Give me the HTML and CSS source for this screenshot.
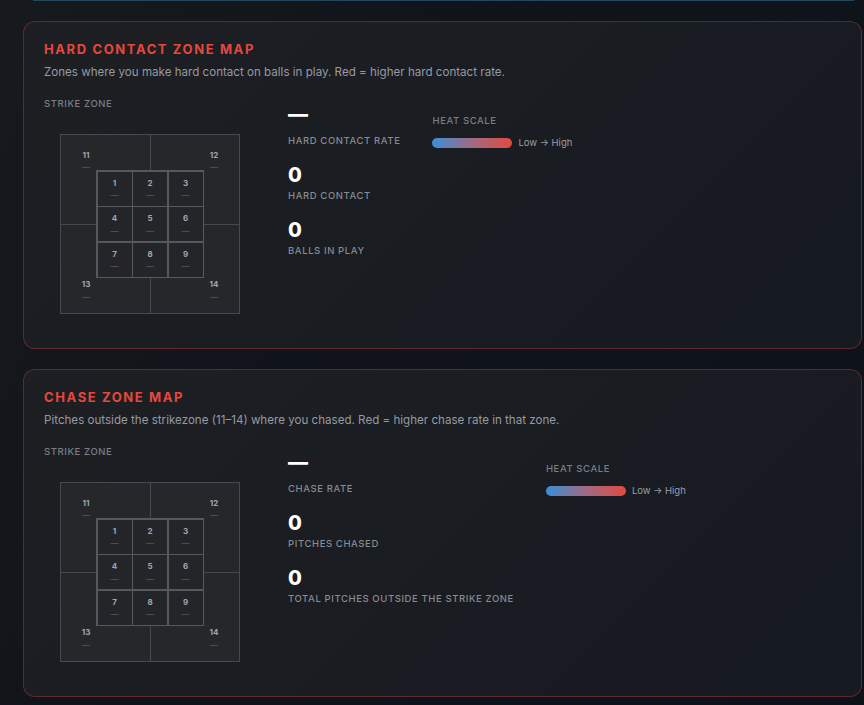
FILE: index.html
```html
<!DOCTYPE html>
<html lang="en">
<head>
<meta charset="utf-8">
<title>Zone Maps</title>
<link rel="stylesheet" href="styles.css">
</head>
<body>
<div class="page">
  <div class="prev-edge"></div>

  <section class="card">
    <h2 class="card-title">Hard Contact Zone Map</h2>
    <p class="card-desc">Zones where you make hard contact on balls in play. Red = higher hard contact rate.</p>
    <div class="card-body">
      <div class="zone-col">
        <div class="caps-label">Strike Zone</div>
        <div class="zone-wrap">
          <div class="zone">
            <div class="quad quad-tl"><div class="zl"><span class="zn">11</span><span class="zd">—</span></div></div>
            <div class="quad quad-tr"><div class="zl"><span class="zn">12</span><span class="zd">—</span></div></div>
            <div class="quad quad-bl"><div class="zl"><span class="zn">13</span><span class="zd">—</span></div></div>
            <div class="quad quad-br"><div class="zl"><span class="zn">14</span><span class="zd">—</span></div></div>
            <div class="inner">
              <div class="cell"><div class="zl"><span class="zn">1</span><span class="zd">—</span></div></div>
              <div class="cell"><div class="zl"><span class="zn">2</span><span class="zd">—</span></div></div>
              <div class="cell"><div class="zl"><span class="zn">3</span><span class="zd">—</span></div></div>
              <div class="cell"><div class="zl"><span class="zn">4</span><span class="zd">—</span></div></div>
              <div class="cell"><div class="zl"><span class="zn">5</span><span class="zd">—</span></div></div>
              <div class="cell"><div class="zl"><span class="zn">6</span><span class="zd">—</span></div></div>
              <div class="cell"><div class="zl"><span class="zn">7</span><span class="zd">—</span></div></div>
              <div class="cell"><div class="zl"><span class="zn">8</span><span class="zd">—</span></div></div>
              <div class="cell"><div class="zl"><span class="zn">9</span><span class="zd">—</span></div></div>
            </div>
          </div>
        </div>
      </div>
      <div class="stats">
        <div class="stat">
          <div class="stat-value stat-empty">—</div>
          <div class="stat-label">Hard Contact Rate</div>
        </div>
        <div class="stat">
          <div class="stat-value">0</div>
          <div class="stat-label">Hard Contact</div>
        </div>
        <div class="stat">
          <div class="stat-value">0</div>
          <div class="stat-label">Balls in Play</div>
        </div>
      </div>
      <div class="heat">
        <div class="caps-label">Heat Scale</div>
        <div class="heat-row">
          <div class="heat-bar"></div>
          <span class="heat-text">Low → High</span>
        </div>
      </div>
    </div>
  </section>

  <section class="card">
    <h2 class="card-title">Chase Zone Map</h2>
    <p class="card-desc">Pitches outside the strikezone (11–14) where you chased. Red = higher chase rate in that zone.</p>
    <div class="card-body">
      <div class="zone-col">
        <div class="caps-label">Strike Zone</div>
        <div class="zone-wrap">
          <div class="zone">
            <div class="quad quad-tl"><div class="zl"><span class="zn">11</span><span class="zd">—</span></div></div>
            <div class="quad quad-tr"><div class="zl"><span class="zn">12</span><span class="zd">—</span></div></div>
            <div class="quad quad-bl"><div class="zl"><span class="zn">13</span><span class="zd">—</span></div></div>
            <div class="quad quad-br"><div class="zl"><span class="zn">14</span><span class="zd">—</span></div></div>
            <div class="inner">
              <div class="cell"><div class="zl"><span class="zn">1</span><span class="zd">—</span></div></div>
              <div class="cell"><div class="zl"><span class="zn">2</span><span class="zd">—</span></div></div>
              <div class="cell"><div class="zl"><span class="zn">3</span><span class="zd">—</span></div></div>
              <div class="cell"><div class="zl"><span class="zn">4</span><span class="zd">—</span></div></div>
              <div class="cell"><div class="zl"><span class="zn">5</span><span class="zd">—</span></div></div>
              <div class="cell"><div class="zl"><span class="zn">6</span><span class="zd">—</span></div></div>
              <div class="cell"><div class="zl"><span class="zn">7</span><span class="zd">—</span></div></div>
              <div class="cell"><div class="zl"><span class="zn">8</span><span class="zd">—</span></div></div>
              <div class="cell"><div class="zl"><span class="zn">9</span><span class="zd">—</span></div></div>
            </div>
          </div>
        </div>
      </div>
      <div class="stats">
        <div class="stat">
          <div class="stat-value stat-empty">—</div>
          <div class="stat-label">Chase Rate</div>
        </div>
        <div class="stat">
          <div class="stat-value">0</div>
          <div class="stat-label">Pitches Chased</div>
        </div>
        <div class="stat">
          <div class="stat-value">0</div>
          <div class="stat-label">Total Pitches Outside the Strike Zone</div>
        </div>
      </div>
      <div class="heat">
        <div class="caps-label">Heat Scale</div>
        <div class="heat-row">
          <div class="heat-bar"></div>
          <span class="heat-text">Low → High</span>
        </div>
      </div>
    </div>
  </section>
</div>
</body>
</html>
```

FILE: styles.css
```css
* {
  box-sizing: border-box;
  margin: 0;
  padding: 0;
}

html,
body {
  height: 100%;
}

body {
  font-family: Inter, "Noto Sans", sans-serif;
  background: linear-gradient(115deg, #16191d 0%, #11151b 35%, #0d1119 100%);
  color: #969aa1;
  overflow: hidden;
}

.page {
  display: flex;
  flex-direction: column;
  padding: 0 2px 0 23px;
}

.prev-edge {
  height: 1px;
  margin: 0 8px 20px 10px;
  background: #24475d;
}

.card {
  height: 328px;
  border: 1px solid rgba(214, 64, 58, 0.38);
  border-radius: 12px;
  background: linear-gradient(135deg, #1d1f23 0%, #191c21 55%, #161a21 100%);
  padding: 19px 20px;
}

.card + .card {
  margin-top: 20px;
}

.card-title {
  font-size: 13px;
  line-height: 16px;
  font-weight: 700;
  letter-spacing: 1.6px;
  text-transform: uppercase;
  color: #e5483d;
}

.card-desc {
  margin-top: 6px;
  font-size: 11.6px;
  line-height: 18px;
  color: #969aa1;
}

.card-body {
  display: flex;
  align-items: flex-start;
  gap: 32px;
  margin-top: 17px;
}

.caps-label {
  font-size: 9.5px;
  line-height: 12px;
  font-weight: 500;
  letter-spacing: 0.6px;
  text-transform: uppercase;
  color: #7a7e85;
}

.zone-wrap {
  margin-top: 8px;
  padding: 16px;
}

.zone {
  position: relative;
  width: 180px;
  height: 180px;
  display: grid;
  grid-template-columns: 1fr 1fr;
  grid-template-rows: 1fr 1fr;
  gap: 1px;
  padding: 1px;
  background: #46494e;
}

.quad {
  display: flex;
  background: #25272b;
  padding: 15px;
}

.quad-tl {
  justify-content: flex-start;
  align-items: flex-start;
}

.quad-tr {
  justify-content: flex-end;
  align-items: flex-start;
}

.quad-bl {
  justify-content: flex-start;
  align-items: flex-end;
  padding-bottom: 12.5px;
}

.quad-br {
  justify-content: flex-end;
  align-items: flex-end;
  padding-bottom: 12.5px;
}

.zl {
  width: 20px;
  display: flex;
  flex-direction: column;
  align-items: center;
  gap: 3.4px;
}

.zn {
  font-size: 8px;
  line-height: 10px;
  font-weight: 700;
  color: #a2a7ae;
}

.zd {
  font-size: 8px;
  line-height: 8px;
  color: #5a5e64;
}

.inner {
  position: absolute;
  top: 36px;
  left: 36px;
  width: 108px;
  height: 108px;
  display: grid;
  grid-template-columns: repeat(3, 1fr);
  grid-template-rows: repeat(3, 1fr);
  gap: 1.5px;
  padding: 1.5px;
  background: #55585d;
}

.cell {
  display: flex;
  align-items: center;
  justify-content: center;
  background: #232529;
}

.stats {
  display: flex;
  flex-direction: column;
  gap: 16px;
  margin-top: 8px;
}

.stat-value {
  font-size: 20px;
  line-height: 24px;
  font-weight: 800;
  color: #ffffff;
}

.stat-empty {
  line-height: 16px;
  margin-bottom: 13px;
}

.stat-label {
  margin-top: 3px;
  font-size: 9.5px;
  line-height: 12px;
  font-weight: 500;
  letter-spacing: 0.6px;
  text-transform: uppercase;
  color: #878b92;
}

.heat {
  margin-top: 16.5px;
}

.heat-row {
  display: flex;
  align-items: center;
  gap: 6px;
  margin-top: 10.5px;
}

.heat-bar {
  width: 80px;
  height: 10px;
  border-radius: 5px;
  background: linear-gradient(90deg, #3b8fd8 0%, #a06a84 50%, #e24a3d 100%);
}

.heat-text {
  font-size: 9.5px;
  line-height: 12px;
  color: #9ba0a6;
}
```
